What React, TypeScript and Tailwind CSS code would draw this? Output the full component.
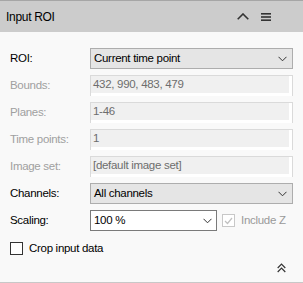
import React from "react";

const Chevron = ({ color = "#333" }: { color?: string }) => (
  <svg width="9" height="6" viewBox="0 0 9 6" className="shrink-0">
    <path d="M0.5 0.8 L4.5 4.8 L8.5 0.8" fill="none" stroke={color} strokeWidth="1" />
  </svg>
);

const Dropdown = ({ text }: { text: string }) => (
  <div className="flex h-[21px] flex-1 items-center justify-between border border-[#adadad] bg-[#e5e5e5] pl-[3px] pr-[5px] text-black">
    <span>{text}</span>
    <Chevron />
  </div>
);

const Disabled = ({ text }: { text: string }) => (
  <div className="flex h-[21px] flex-1 border-l border-r border-t border-[#dadada] bg-white pb-[3px] pr-[3px]">
    <div className="flex flex-1 items-center bg-[#f0f0f0] pl-[2px] text-[#6d6d6d]">{text}</div>
  </div>
);

const Row = ({ label, disabled, children }: { label: string; disabled?: boolean; children: React.ReactNode }) => (
  <div className="flex h-[21px] items-center">
    <div className={`w-[80px] shrink-0 ${disabled ? "text-[#a0a0a0]" : "text-black"}`}>{label}</div>
    {children}
  </div>
);

export default function App() {
  return (
    <div className="h-[283px] w-[303px] bg-white font-['Liberation_Sans',sans-serif] text-[11.5px] tracking-[-0.3px]">
      <div className="flex h-[32px] items-center justify-between border-t border-[#a6a6a6] bg-[#cccccc] pl-[6px] pr-[32px]">
        <span className="text-[12px] text-black">Input ROI</span>
        <div className="flex items-center gap-[12px]">
          <svg width="12" height="7" viewBox="0 0 12 7">
            <path d="M0.7 6.3 L6 1 L11.3 6.3" fill="none" stroke="#333" strokeWidth="1.6" />
          </svg>
          <svg width="10" height="8" viewBox="0 0 10 8">
            <rect x="0" y="0" width="10" height="1.6" fill="#333" />
            <rect x="0" y="3.2" width="10" height="1.6" fill="#333" />
            <rect x="0" y="6.4" width="10" height="1.6" fill="#333" />
          </svg>
        </div>
      </div>
      <div className="flex h-[251px] flex-col border-b border-[#c8c8c8] bg-[#f9f9f9] pl-[10px] pr-[10px] pt-[16px]">
        <div className="flex flex-col gap-[6px]">
          <Row label="ROI:">
            <Dropdown text="Current time point" />
          </Row>
          <Row label="Bounds:" disabled>
            <Disabled text="432, 990, 483, 479" />
          </Row>
          <Row label="Planes:" disabled>
            <Disabled text="1-46" />
          </Row>
          <Row label="Time points:" disabled>
            <Disabled text="1" />
          </Row>
          <Row label="Image set:" disabled>
            <Disabled text="[default image set]" />
          </Row>
          <Row label="Channels:">
            <Dropdown text="All channels" />
          </Row>
          <Row label="Scaling:">
            <div className="flex h-[21px] w-[127px] items-center justify-between border border-[#7a7a7a] bg-white pl-[3px] pr-[4px] text-black">
              <span>100 %</span>
              <Chevron />
            </div>
            <div className="ml-[5px] flex h-[13px] w-[13px] items-center justify-center border border-[#c8c8c8] bg-white">
              <svg width="9" height="8" viewBox="0 0 9 8">
                <path d="M1 4 L3.5 6.5 L8 1" fill="none" stroke="#c0c0c0" strokeWidth="1.2" />
              </svg>
            </div>
            <span className="ml-[6px] text-[#9a9a9a]">Include Z</span>
          </Row>
        </div>
        <div className="mt-[9px] flex h-[17px] items-center">
          <div className="h-[13px] w-[13px] border border-[#333] bg-white" />
          <span className="ml-[6px] text-black">Crop input data</span>
        </div>
        <div className="mt-[6px] flex justify-end pr-[7px]">
          <svg width="9" height="10" viewBox="0 0 9 10">
            <path d="M0.7 5 L4.5 1.2 L8.3 5 M0.7 9 L4.5 5.2 L8.3 9" fill="none" stroke="#333" strokeWidth="1.2" />
          </svg>
        </div>
      </div>
    </div>
  );
}
